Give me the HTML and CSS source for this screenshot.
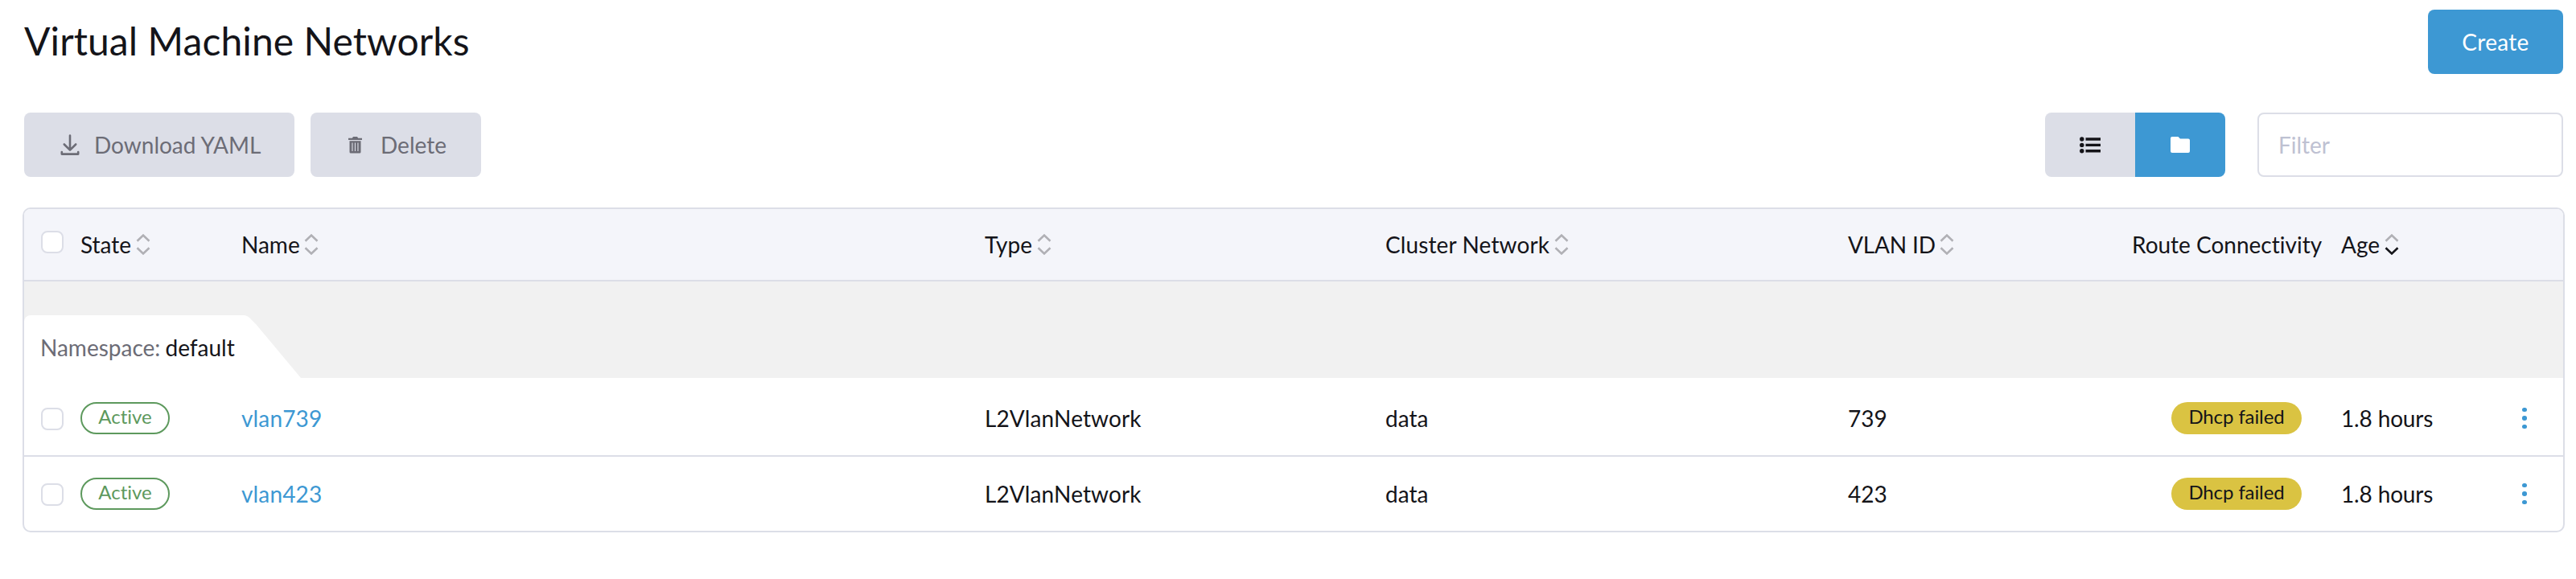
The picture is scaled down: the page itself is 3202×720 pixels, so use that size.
FILE: index.html
```html
<!DOCTYPE html>
<html lang="en">
<head>
<meta charset="utf-8">
<title>Virtual Machine Networks</title>
<link rel="stylesheet" href="styles.css">
</head>
<body>
<svg class="defs" width="0" height="0" aria-hidden="true">
  <symbol id="sort-up" viewBox="0 0 18 10"><path d="M1.500 8.800 9 1.600l7.500 7.200"/></symbol>
  <symbol id="sort-down" viewBox="0 0 18 10"><path d="M1.500 1.200 9 8.400l7.500-7.200"/></symbol>
</svg>
<main class="page">
  <header class="page-head">
    <h1>Virtual Machine Networks</h1>
    <button class="btn primary">Create</button>
  </header>
  <section class="toolbar">
    <div class="bulk">
      <button class="btn muted download">
        <svg width="24" height="28" viewBox="0 0 24 28" fill="none" stroke="currentColor" stroke-width="2.600" stroke-linecap="round" stroke-linejoin="round"><path d="M12 3.500v18M4.800 14.500l7.200 7.200 7.200-7.200"/><path d="M1.800 24v2.600h20.400V24"/></svg>
        <span>Download YAML</span>
      </button>
      <button class="btn muted delete">
        <svg width="17" height="21" viewBox="0 0 17 21"><path fill="currentColor" fill-rule="evenodd" d="M6 0h5l1.200 1.800H17V4H0V1.800h4.800zM1.500 5.200h14v13.800q0 1.500-1.500 1.500H3q-1.500 0-1.500-1.500zM4.400 7.500v10.500h1.100V7.500zm3.500 0v10.500H9V7.500zm3.500 0v10.500h1.100V7.500z"/></svg>
        <span>Delete</span>
      </button>
    </div>
    <div class="views">
      <div class="toggle">
        <button class="list"><svg width="26" height="21" viewBox="0 0 26 21" fill="currentColor"><circle cx="2.800" cy="3" r="2.700"/><circle cx="2.800" cy="10.400" r="2.700"/><circle cx="2.800" cy="17.800" r="2.700"/><path d="M7.500 1.300H26v3.400H7.500zM7.500 8.700H26v3.400H7.500zM7.500 16.100H26v3.400H7.500z"/></svg></button>
        <button class="folder"><svg width="24" height="20" viewBox="0 0 24 20" fill="currentColor"><path d="M2 0h7.500l2.500 2.500h10a2 2 0 0 1 2 2V18a2 2 0 0 1-2 2H2a2 2 0 0 1-2-2V2a2 2 0 0 1 2-2z"/></svg></button>
      </div>
      <input class="filter" placeholder="Filter">
    </div>
  </section>
  <section class="table">
    <div class="row head">
      <div><i class="check"></i></div>
      <div>State<span class="sort"><svg><use href="#sort-up"/></svg><svg><use href="#sort-down"/></svg></span></div>
      <div>Name<span class="sort"><svg><use href="#sort-up"/></svg><svg><use href="#sort-down"/></svg></span></div>
      <div>Type<span class="sort"><svg><use href="#sort-up"/></svg><svg><use href="#sort-down"/></svg></span></div>
      <div class="wide">Cluster Network<span class="sort"><svg><use href="#sort-up"/></svg><svg><use href="#sort-down"/></svg></span></div>
      <div class="vlan">VLAN ID<span class="sort"><svg><use href="#sort-up"/></svg><svg><use href="#sort-down"/></svg></span></div>
      <div class="route">Route Connectivity</div>
      <div>Age<span class="sort"><svg><use href="#sort-up"/></svg><svg class="on"><use href="#sort-down"/></svg></span></div>
      <div></div>
    </div>
    <div class="group">
      <div class="tab"><span>Namespace:</span> default</div>
      <svg class="slope" width="70" height="78" viewBox="0 0 70 78"><path d="M0 0Q5 1 8 5L14 11 70 78H0z" fill="#fff"/></svg>
    </div>
    <div class="row item">
      <div><i class="check"></i></div>
      <div><span class="badge active">Active</span></div>
      <div><a class="link">vlan739</a></div>
      <div class="wide">L2VlanNetwork</div>
      <div>data</div>
      <div>739</div>
      <div class="center"><span class="badge failed">Dhcp failed</span></div>
      <div class="age">1.8 hours</div>
      <div><span class="dots"><i></i><i></i><i></i></span></div>
    </div>
    <div class="row item">
      <div><i class="check"></i></div>
      <div><span class="badge active">Active</span></div>
      <div><a class="link">vlan423</a></div>
      <div class="wide">L2VlanNetwork</div>
      <div>data</div>
      <div>423</div>
      <div class="center"><span class="badge failed">Dhcp failed</span></div>
      <div class="age">1.8 hours</div>
      <div><span class="dots"><i></i><i></i><i></i></span></div>
    </div>
  </section>
</main>
</body>
</html>
```
FILE: styles.css
```css
* { box-sizing: border-box; }
body { margin: 0; background: #fff; color: #141419; font: 28px/32px Lato, "Liberation Sans", sans-serif; font-variant-ligatures: none; }
.defs { position: absolute; }
.page { padding: 12px 16px 0 28px; }
.page-head { display: flex; justify-content: space-between; height: 80px; padding-left: 2px; }
h1 { margin: 7px 0 0; font-size: 48px; line-height: 64px; font-weight: 400; letter-spacing: 0.08px; }
button, input { font: inherit; border: 0; }
.btn { display: flex; align-items: center; height: 80px; border-radius: 8px; padding: 0; }
.primary { width: 168px; justify-content: center; background: #3d98d3; color: #fff; letter-spacing: 0.3px; }
.muted { background: #dcdee7; color: #6c6c76; }
.toolbar { display: flex; justify-content: space-between; margin-top: 48px; padding-left: 2px; }
.bulk { display: flex; gap: 20px; }
.download { width: 336px; padding-left: 45px; gap: 18px; }
.download svg { margin-top: -2px; }
.delete { width: 212px; padding-left: 47px; gap: 23px; }
.views { display: flex; gap: 40px; }
.toggle { display: flex; border-radius: 8px; overflow: hidden; }
.toggle button { width: 112px; height: 80px; padding: 0; display: flex; align-items: center; justify-content: center; }
.list { background: #dcdee7; color: #141419; }
.folder { background: #3d98d3; color: #fff; }
.filter { width: 380px; height: 80px; padding: 0 24px; border: 2px solid #dcdee7; border-radius: 8px; background: #fff; }
.filter::placeholder { color: #bec1d2; opacity: 1; }
.table { margin: 38px -2px 0 0; border: 2px solid #dcdee7; border-radius: 10px; overflow: hidden; }
.row { display: grid; grid-template-columns: 70px 200px 924px 498px 575px 342px 271px 203px 1fr; align-items: center; }
.row > div { display: flex; align-items: center; white-space: nowrap; }
.row > div:first-child { padding-left: 21px; }
.row > .center { justify-content: center; padding-left: 11px; }
.row > .route { padding-left: 11px; }
.row > .wide { letter-spacing: 0.12px; }
.row > .vlan { letter-spacing: -0.15px; }
.head { height: 90px; background: #f4f5fa; border-bottom: 2px solid #dcdee7; }
.head > div:first-child { padding: 0 0 6px 21px; }
.check { width: 28px; height: 28px; border: 2px solid #dcdee7; border-radius: 8px; background: #fff; }
.item .check { margin-top: 2px; }
.sort { display: flex; flex-direction: column; gap: 6px; margin-left: 5.5px; }
.sort svg { display: block; width: 18px; height: 10px; fill: none; stroke: #b0b0b5; stroke-width: 2.6; }
.sort .on { stroke: #141419; }
.group { display: flex; height: 120px; padding-top: 42px; background: #f1f1f1; }
.tab { width: 274px; height: 78px; padding: 24px 0 0 20px; background: #fff; border-radius: 8px 0 0 0; white-space: nowrap; word-spacing: -1px; }
.tab span { color: #6c6c76; }
.item { height: 96px; padding-top: 4px; }
.item + .item { height: 94px; padding-top: 0; border-top: 2px solid #dcdee7; }
.link { color: #3d98d3; letter-spacing: 0.15px; }
.badge { height: 40px; border-radius: 20px; font-size: 24px; line-height: 32px; }
.active { width: 111px; border: 2px solid #5d995d; color: #5d995d; text-align: center; }
.failed { width: 162px; background: #dac342; text-align: center; padding-top: 2px; letter-spacing: -0.1px; }
.age { letter-spacing: -0.15px; }
.dots { display: flex; flex-direction: column; gap: 5px; padding-left: 22px; }
.dots i { width: 5.5px; height: 5.5px; border-radius: 50%; background: #3d98d3; }
```
